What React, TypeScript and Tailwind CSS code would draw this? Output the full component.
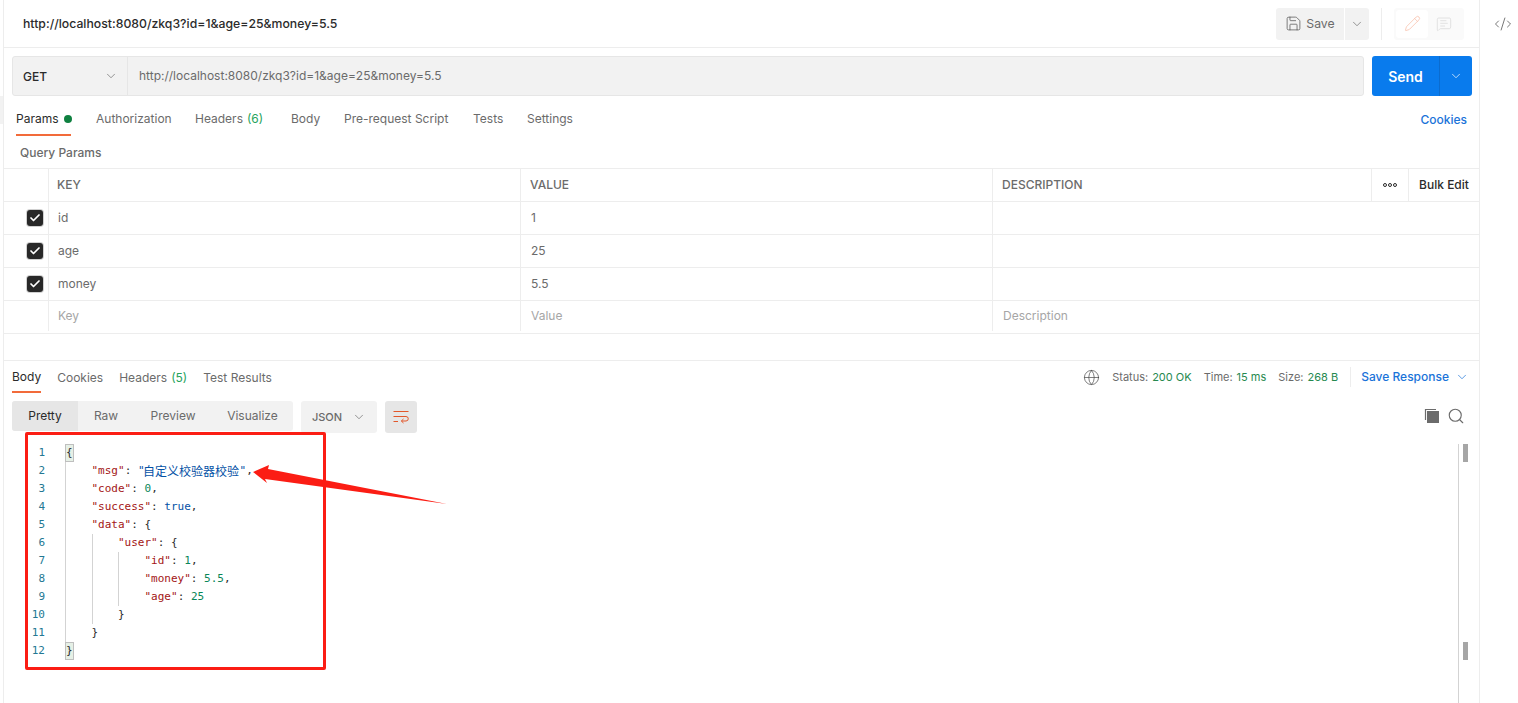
import React from 'react';
import { ChevronDown, Save, Pencil, MessageSquareText, CodeXml, Globe, Search, Check } from 'lucide-react';

const ui = "font-['Inter',sans-serif]";

const requestTabs = [
  { label: 'Authorization', w: 'w-[99px]' },
  { label: 'Headers', count: '(6)', w: 'w-[96px]' },
  { label: 'Body', w: 'w-[53px]' },
  { label: 'Pre-request Script', w: 'w-[129px]' },
  { label: 'Tests', w: 'w-[54px]' },
  { label: 'Settings', w: 'w-[60px]' },
];

const params = [
  { key: 'id', value: '1' },
  { key: 'age', value: '25' },
  { key: 'money', value: '5.5' },
];

type Tok = { t: string; c?: string; cjk?: boolean };

const STR = 'text-[#a31515]';
const NUM = 'text-[#098658]';
const BLUE = 'text-[#0451a5]';

const codeLines: { indent: number; toks: Tok[]; box?: boolean }[] = [
  { indent: 0, box: true, toks: [{ t: '{' }] },
  { indent: 1, toks: [{ t: '"msg"', c: STR }, { t: ': ' }, { t: '"', c: BLUE }, { t: '自定义校验器校验', c: BLUE, cjk: true }, { t: '"', c: BLUE }, { t: ',' }] },
  { indent: 1, toks: [{ t: '"code"', c: STR }, { t: ': ' }, { t: '0', c: NUM }, { t: ',' }] },
  { indent: 1, toks: [{ t: '"success"', c: STR }, { t: ': ' }, { t: 'true', c: BLUE }, { t: ',' }] },
  { indent: 1, toks: [{ t: '"data"', c: STR }, { t: ': {' }] },
  { indent: 2, toks: [{ t: '"user"', c: STR }, { t: ': {' }] },
  { indent: 3, toks: [{ t: '"id"', c: STR }, { t: ': ' }, { t: '1', c: NUM }, { t: ',' }] },
  { indent: 3, toks: [{ t: '"money"', c: STR }, { t: ': ' }, { t: '5.5', c: NUM }, { t: ',' }] },
  { indent: 3, toks: [{ t: '"age"', c: STR }, { t: ': ' }, { t: '25', c: NUM }] },
  { indent: 2, toks: [{ t: '}' }] },
  { indent: 1, toks: [{ t: '}' }] },
  { indent: 0, box: true, toks: [{ t: '}' }] },
];

const CopyIcon = () => (
  <svg width="16" height="16" viewBox="0 0 16 16" fill="none">
    <path d="M1.5 12V1.5H12" stroke="#6b6b6b" strokeWidth="1.2" />
    <rect x="3" y="3" width="12" height="12" fill="#6b6b6b" />
  </svg>
);

const WrapIcon = () => (
  <svg width="16" height="14" viewBox="0 0 16 14" fill="none" stroke="#e2572b" strokeWidth="1">
    <path d="M0.5 1.5H15.5" />
    <path d="M0.5 6.5H13a2.25 2.25 0 0 1 0 4.5H8.5" />
    <path d="M10.5 9L8.3 11l2.2 2" />
    <path d="M0.5 11.5H5" />
  </svg>
);

function App() {
  return (
    <div className={`${ui} relative h-[703px] w-[1518px] overflow-hidden bg-white text-[12px] text-[#6b6b6b]`}>
      <div className="absolute left-0 top-[96px] h-[28px] w-[3px] bg-[#f2f2f2]" />
      <div className="flex h-full">
        {/* Main panel */}
        <div className="ml-[3px] flex h-full w-[1477px] flex-col border-x border-[#ededed]">
          {/* Title bar */}
          <div className="flex h-[48px] shrink-0 items-center border-b border-[#ededed] pl-[19px] pr-[15px]">
            <span className="pt-[1px] text-[12.25px] font-medium text-[#2b2b2b]">http://localhost:8080/zkq3?id=1&amp;age=25&amp;money=5.5</span>
            <div className="ml-auto flex items-center">
              <div className="flex h-[32px] w-[68px] items-center justify-center gap-[4px] rounded-l-[3px] bg-[#f2f2f2]">
                <Save size={17} strokeWidth={1.1} className="text-[#5c5c5c]" />
                <span className="pt-[1px] text-[12.25px] text-[#6b6b6b]">Save</span>
              </div>
              <div className="ml-px flex h-[32px] w-[24px] items-center justify-center rounded-r-[3px] bg-[#f2f2f2]">
                <ChevronDown size={14} strokeWidth={1.2} />
              </div>
              <div className="ml-[12px] h-[32px] w-px bg-[#ededed]" />
              <div className="ml-[12px] flex h-[32px] w-[70px] items-center rounded-[3px] bg-[#fafafa] p-[2px]">
                <div className="flex h-[28px] w-[32px] items-center justify-center rounded-[3px] bg-white">
                  <Pencil size={17} strokeWidth={1} className="text-[#f8b9a3]" />
                </div>
                <div className="flex h-[28px] w-[32px] items-center justify-center">
                  <MessageSquareText size={16} strokeWidth={1} className="text-[#d6d6d6]" />
                </div>
              </div>
            </div>
          </div>

          {/* URL row */}
          <div className="mt-[8px] flex h-[40px] shrink-0 pl-[8px] pr-[7px]">
            <div className="flex flex-1 rounded-[3px] border border-[#e6e6e6] bg-[#f2f2f2]">
              <div className="flex w-[115px] items-center justify-between border-r border-[#e6e6e6] pl-[10px] pr-[9px]">
                <span className="pt-[2px] font-medium text-[#2b2b2b]">GET</span>
                <ChevronDown size={14} strokeWidth={1.2} />
              </div>
              <div className="flex flex-1 items-center pl-[11px]">http://localhost:8080/zkq3?id=1&amp;age=25&amp;money=5.5</div>
            </div>
            <div className="ml-[8px] flex w-[100px] rounded-[3px] bg-[#097bed] text-white">
              <div className="flex w-[68px] items-center justify-center border-r border-[#0a6cd0] text-[14px] font-semibold">Send</div>
              <div className="flex flex-1 items-center justify-center">
                <ChevronDown size={14} strokeWidth={1.2} />
              </div>
            </div>
          </div>

          {/* Request tabs */}
          <div className="flex h-[40px] shrink-0 items-start pl-[12px] pr-[12px]">
            <div className="mr-[25px] flex h-[40px] w-[55px] shrink-0 items-center gap-[5px] border-b-2 border-[#f26b3a] pt-[8px] text-[#2b2b2b]">
              <span>Params</span>
              <span className="h-[8px] w-[8px] shrink-0 rounded-full bg-[#0f8040]" />
            </div>
            {requestTabs.map((tab) => (
              <div key={tab.label} className={`flex h-[40px] items-center ${tab.w} pt-[8px] pb-[2px]`}>
                <span>{tab.label}</span>
                {tab.count && <span className="ml-[4px] text-[#26a35c]">{tab.count}</span>}
              </div>
            ))}
            <span className="ml-auto pt-[15px] font-medium text-[#1a73d9]">Cookies</span>
          </div>

          {/* Query params */}
          <div className="flex h-[32px] shrink-0 items-center pl-[16px] pt-[2px] font-medium">Query Params</div>

          {/* Params table */}
          <div className="shrink-0 border-t border-[#ededed]">
            <div className="flex h-[33px] border-b border-[#ededed] font-medium">
              <div className="w-[45px] border-r border-[#ededed]" />
              <div className="flex w-[472px] items-center border-r border-[#ededed] pl-[8px]">KEY</div>
              <div className="flex w-[472px] items-center border-r border-[#ededed] pl-[9px]">VALUE</div>
              <div className="flex w-[379px] items-center border-r border-[#ededed] pl-[9px]">DESCRIPTION</div>
              <div className="flex w-[37px] items-center justify-center border-r border-[#ededed] text-[#2b2b2b]">
                <span className="flex gap-px">
                  <span className="h-[4px] w-[4px] rounded-full border border-[#2b2b2b]" />
                  <span className="h-[4px] w-[4px] rounded-full border border-[#2b2b2b]" />
                  <span className="h-[4px] w-[4px] rounded-full border border-[#2b2b2b]" />
                </span>
              </div>
              <div className="flex flex-1 items-center justify-center text-[#2b2b2b]">Bulk Edit</div>
            </div>
            {params.map((p) => (
              <div key={p.key} className="flex h-[33px] border-b border-[#ededed]">
                <div className="flex w-[45px] items-center justify-end border-r border-[#ededed] pr-[5px]">
                  <span className="flex h-[16px] w-[16px] items-center justify-center rounded-[3px] bg-[#282828] text-white ring-1 ring-[#d0d0d0]">
                    <Check size={12} strokeWidth={3.5} />
                  </span>
                </div>
                <div className="flex w-[472px] items-center border-r border-[#ededed] pl-[9px]">{p.key}</div>
                <div className="flex w-[472px] items-center border-r border-[#ededed] pl-[10px]">{p.value}</div>
                <div className="flex-1" />
              </div>
            ))}
            <div className="flex h-[33px] border-b border-[#ededed] pb-[2px] text-[#a6a6a6]">
              <div className="w-[45px] border-r border-[#ededed]" />
              <div className="flex w-[472px] items-center border-r border-[#ededed] pl-[9px]">Key</div>
              <div className="flex w-[472px] items-center border-r border-[#ededed] pl-[10px]">Value</div>
              <div className="flex flex-1 items-center pl-[10px]">Description</div>
            </div>
          </div>

          {/* Response */}
          <div className="mt-[26px] flex min-h-0 flex-1 flex-col border-t border-[#ededed]">
            <div className="flex h-[32px] shrink-0 items-start pl-[8px] pr-[10px]">
              <div className="mr-[16px] flex h-[32px] items-center border-b-2 border-[#f26b3a] pt-[2px] text-[#2b2b2b]">Body</div>
              <div className="mr-[16px] flex h-[32px] items-center pt-[1px]">Cookies</div>
              <div className="mr-[16px] flex h-[32px] items-center pt-[1px]">
                Headers<span className="ml-[4px] text-[#26a35c]">(5)</span>
              </div>
              <div className="flex h-[32px] items-center pt-[1px]">Test Results</div>
              <div className="ml-auto flex h-[32px] items-center text-[11px]">
                <Globe size={17} strokeWidth={1} className="mr-[12px] text-[#4a4a4a]" />
                <span>Status:</span>
                <span className="ml-[4px] text-[#26894f]">200 OK</span>
                <span className="ml-[12px]">Time:</span>
                <span className="ml-[4px] text-[#26894f]">15 ms</span>
                <span className="ml-[12px]">Size:</span>
                <span className="ml-[4px] text-[#26894f]">268 B</span>
                <div className="ml-[12px] h-[20px] w-px bg-[#ededed]" />
                <span className="ml-[10px] text-[12px] font-medium text-[#1a73d9]">Save Response</span>
                <ChevronDown size={14} strokeWidth={1.2} className="ml-[6px] text-[#1a73d9]" />
              </div>
            </div>

            {/* Response toolbar */}
            <div className="mt-[8px] flex h-[32px] shrink-0 items-start pl-[8px] pr-[14px]">
              <div className="flex h-[30px] w-[281px] rounded-[3px] bg-[#f2f2f2]">
                <div className="flex w-[66px] items-center justify-center rounded-l-[3px] bg-[#e6e6e6] text-[#2b2b2b]">Pretty</div>
                <div className="flex w-[56px] items-center justify-center">Raw</div>
                <div className="flex w-[78px] items-center justify-center">Preview</div>
                <div className="flex w-[81px] items-center justify-center">Visualize</div>
              </div>
              <div className="ml-[8px] flex h-[32px] w-[76px] items-center justify-center gap-[10px] rounded-[3px] bg-[#f2f2f2] text-[11px] font-medium">
                JSON
                <ChevronDown size={14} strokeWidth={1.2} />
              </div>
              <div className="ml-[8px] flex h-[32px] w-[32px] items-center justify-center rounded-[3px] bg-[#e6e6e6]">
                <WrapIcon />
              </div>
              <div className="ml-auto flex h-[30px] items-center gap-[7px]">
                <CopyIcon />
                <Search size={18} strokeWidth={1.5} className="text-[#6b6b6b]" />
              </div>
            </div>

            {/* Code viewer */}
            <div className="mt-[11px] flex min-h-0 flex-1 font-['DejaVu_Sans_Mono',monospace] text-[11px] text-[#2b2b2b]">
              <div className="w-[61px] shrink-0">
                {codeLines.map((_, i) => (
                  <div key={i} className="flex h-[18px] items-center justify-end pr-[20px] text-[#237893]">{i + 1}</div>
                ))}
              </div>
              <div className="min-w-0 flex-1">
                {codeLines.map((line, i) => (
                  <div key={i} className="flex h-[18px] items-stretch whitespace-pre">
                    {Array.from({ length: line.indent }).map((_, g) => (
                      <span key={g} className="w-[26.5px] shrink-0 border-l border-[#d3d3d3]" />
                    ))}
                    <span className={`flex items-center ${line.box ? 'border border-[#bfbfbf] bg-[#e6f0e6]' : ''}`}>
                      {line.toks.map((tok, j) => (
                        <span key={j} className={`${tok.c ?? ''} ${tok.cjk ? "-ml-[1.5px] mr-[0.5px] font-['Noto_Sans_CJK_SC',sans-serif] text-[12px]" : ''}`}>{tok.t}</span>
                      ))}
                    </span>
                  </div>
                ))}
              </div>
              {/* Scrollbar gutter */}
              <div className="mr-[11px] flex w-[10px] shrink-0 flex-col items-end border-l border-[#d3d3d3]">
                <div className="h-[18px] w-[5px] bg-[#a6a6a6]" />
                <div className="mt-[180px] h-[18px] w-[5px] bg-[#a6a6a6]" />
              </div>
            </div>
          </div>
        </div>

        {/* Right rail */}
        <div className="flex flex-1 justify-center pt-[15px] pl-[8px]">
          <CodeXml size={18} strokeWidth={1} className="text-[#4a4a4a]" />
        </div>
      </div>

      {/* Red annotation drawn over the screenshot */}
      <div className="absolute left-[25px] top-[432px] h-[238px] w-[301px] rounded-[2px] border-[3px] border-[#fb1d14]" />
      <svg className="absolute left-[250px] top-[460px]" width="200" height="50" viewBox="250 460 200 50">
        <polygon points="253,472 269,465 268,469 447,504 265,479 267,483" fill="#fb1d14" />
      </svg>
    </div>
  );
}

export default App;
